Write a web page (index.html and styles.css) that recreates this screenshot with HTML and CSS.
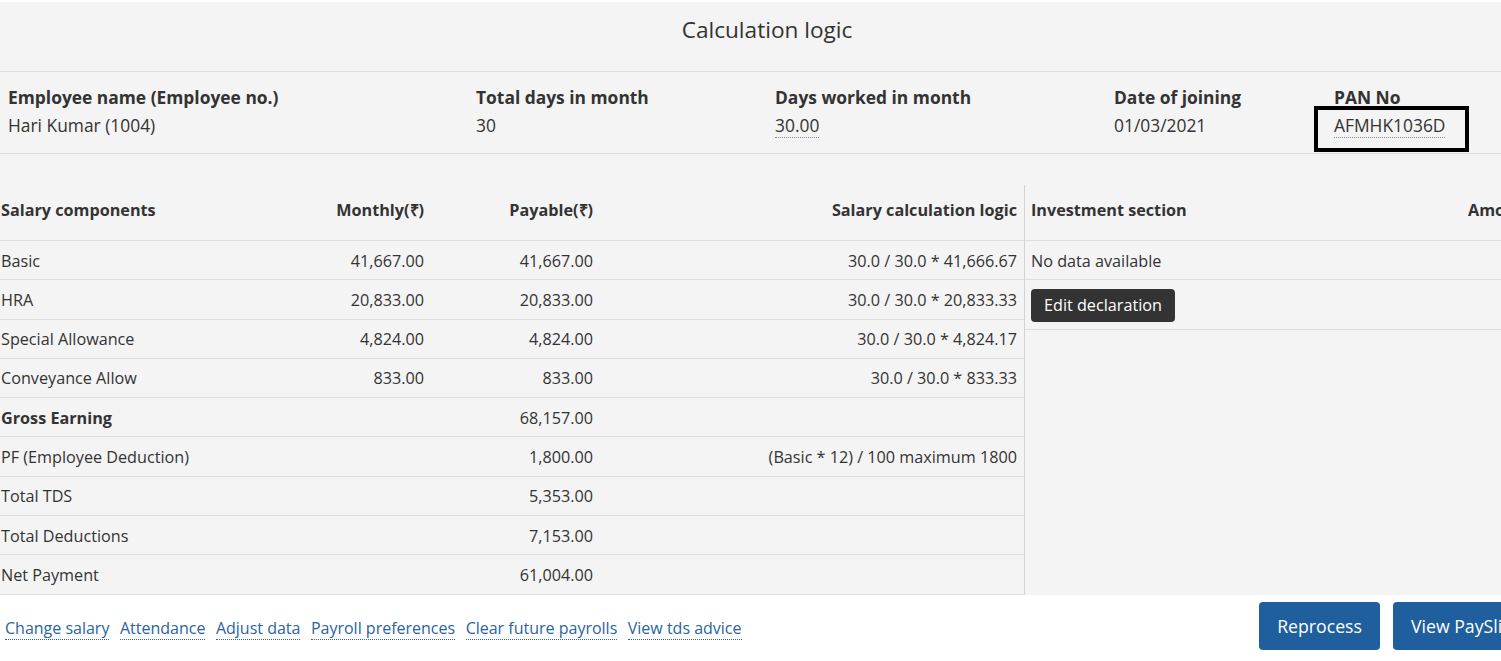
FILE: index.html
```html
<!DOCTYPE html>
<html lang="en">
<head>
<meta charset="utf-8">
<title>Calculation logic</title>
<link rel="stylesheet" href="styles.css">
</head>
<body>
<div class="page">
  <div class="panel">
    <h1 class="title">Calculation logic</h1>
    <div class="info">
      <div class="info-col">
        <div class="info-label">Employee name (Employee no.)</div>
        <div class="info-value">Hari Kumar (1004)</div>
      </div>
      <div class="info-col">
        <div class="info-label">Total days in month</div>
        <div class="info-value">30</div>
      </div>
      <div class="info-col">
        <div class="info-label">Days worked in month</div>
        <div class="info-value"><span class="dotted">30.00</span></div>
      </div>
      <div class="info-col">
        <div class="info-label">Date of joining</div>
        <div class="info-value">01/03/2021</div>
      </div>
      <div class="info-col pan-col">
        <div class="info-label">PAN No</div>
        <div class="info-value"><span class="dotted">AFMHK1036D</span></div>
        <div class="highlight-box"></div>
      </div>
    </div>

    <div class="tables">
      <div class="salary">
        <div class="srow head">
          <div class="c1">Salary components</div>
          <div class="c2">Monthly(₹)</div>
          <div class="c3">Payable(₹)</div>
          <div class="c4">Salary calculation logic</div>
        </div>
        <div class="srow">
          <div class="c1">Basic</div>
          <div class="c2">41,667.00</div>
          <div class="c3">41,667.00</div>
          <div class="c4">30.0 / 30.0 * 41,666.67</div>
        </div>
        <div class="srow">
          <div class="c1">HRA</div>
          <div class="c2">20,833.00</div>
          <div class="c3">20,833.00</div>
          <div class="c4">30.0 / 30.0 * 20,833.33</div>
        </div>
        <div class="srow">
          <div class="c1">Special Allowance</div>
          <div class="c2">4,824.00</div>
          <div class="c3">4,824.00</div>
          <div class="c4">30.0 / 30.0 * 4,824.17</div>
        </div>
        <div class="srow">
          <div class="c1">Conveyance Allow</div>
          <div class="c2">833.00</div>
          <div class="c3">833.00</div>
          <div class="c4">30.0 / 30.0 * 833.33</div>
        </div>
        <div class="srow">
          <div class="c1 bold">Gross Earning</div>
          <div class="c2"></div>
          <div class="c3">68,157.00</div>
          <div class="c4"></div>
        </div>
        <div class="srow">
          <div class="c1">PF (Employee Deduction)</div>
          <div class="c2"></div>
          <div class="c3">1,800.00</div>
          <div class="c4">(Basic * 12) / 100 maximum 1800</div>
        </div>
        <div class="srow">
          <div class="c1">Total TDS</div>
          <div class="c2"></div>
          <div class="c3">5,353.00</div>
          <div class="c4"></div>
        </div>
        <div class="srow">
          <div class="c1">Total Deductions</div>
          <div class="c2"></div>
          <div class="c3">7,153.00</div>
          <div class="c4"></div>
        </div>
        <div class="srow">
          <div class="c1">Net Payment</div>
          <div class="c2"></div>
          <div class="c3">61,004.00</div>
          <div class="c4"></div>
        </div>
      </div>

      <div class="invest">
        <div class="irow head">
          <div class="i1">Investment section</div>
          <div class="i2">Amount(₹)</div>
        </div>
        <div class="irow">
          <div class="i1">No data available</div>
          <div class="i2"></div>
        </div>
        <div class="irow btn-row">
          <div class="i1"><button class="dark-btn">Edit declaration</button></div>
          <div class="i2"></div>
        </div>
      </div>
    </div>
  </div>

  <div class="footer">
    <div class="links">
      <a href="#" class="link">Change salary</a>
      <a href="#" class="link">Attendance</a>
      <a href="#" class="link">Adjust data</a>
      <a href="#" class="link">Payroll preferences</a>
      <a href="#" class="link">Clear future payrolls</a>
      <a href="#" class="link">View tds advice</a>
    </div>
    <div class="actions">
      <button class="primary-btn">Reprocess</button>
      <button class="primary-btn">View PaySlip</button>
    </div>
  </div>
</div>
</body>
</html>
```

FILE: styles.css
```css
html, body {
  margin: 0;
  padding: 0;
  background: #ffffff;
  overflow: hidden;
}

body {
  font-family: "Open Sans", "Liberation Sans", sans-serif;
  color: #333333;
  width: 1501px;
  height: 661px;
}

.page {
  width: 1534px;
  padding-top: 2px;
}

.panel {
  background: #f4f4f4;
}

.title {
  margin: 0;
  padding: 13px 0 26px;
  font-size: 22.6px;
  line-height: 30px;
  font-weight: 400;
  text-align: center;
  border-bottom: 1px solid #dedede;
}

.info {
  display: grid;
  grid-template-columns: 468px 299px 339px 220px auto;
  padding: 13px 0 16px 8px;
  border-bottom: 1px solid #dedede;
}

.info-col {
  position: relative;
}

.info-label {
  font-size: 17.4px;
  font-weight: 700;
  line-height: 24px;
}

.info-value {
  font-size: 17.4px;
  line-height: 24px;
  margin-top: 4px;
}

.dotted {
  border-bottom: 1px dotted #8a8a8a;
}

.highlight-box {
  position: absolute;
  left: -20px;
  top: 21px;
  width: 147px;
  height: 38px;
  border: 4px solid #000000;
}

.tables {
  display: flex;
  margin-top: 31px;
}

.salary {
  width: 1024px;
  border-right: 1px solid #d2d2d2;
  font-size: 16.2px;
}

.srow {
  display: grid;
  grid-template-columns: 261px 170px 169px 424px;
  border-bottom: 1px solid #dedede;
}

.srow > div {
  padding: 8.5px 7px 7.6px 0;
  line-height: 22.2px;
  text-align: right;
}

.srow > .c1 {
  padding-left: 1px;
  text-align: left;
}

.head > div {
  font-weight: 700;
  padding-top: 14px;
  padding-bottom: 19px;
  line-height: 22px;
}

.bold {
  font-weight: 700;
}

.invest {
  flex: 1;
  font-size: 16.2px;
  align-self: flex-start;
}

.irow {
  display: grid;
  grid-template-columns: 437px auto;
  border-bottom: 1px solid #dedede;
}

.irow > div {
  padding: 8.5px 6px 7.6px;
  line-height: 22.2px;
}

.irow.head > div {
  padding-top: 14px;
  padding-bottom: 19px;
  line-height: 22px;
}

.irow.btn-row > div {
  padding-top: 9px;
  padding-bottom: 7px;
}

.dark-btn {
  font-family: "Open Sans", "Liberation Sans", sans-serif;
  font-size: 16.2px;
  line-height: 21px;
  color: #ffffff;
  background: #333333;
  border: none;
  border-radius: 4px;
  padding: 6px 13px;
  display: block;
}

.footer {
  display: flex;
  justify-content: space-between;
  align-items: center;
  padding-top: 7px;
  padding-right: 3px;
}

.links {
  display: flex;
  gap: 10.5px;
  padding-left: 5px;
  padding-top: 5px;
}

.link {
  font-size: 16px;
  line-height: 22px;
  color: #2a64a0;
  text-decoration: none;
  border-bottom: 1px dotted #2a64a0;
}

.actions {
  display: flex;
  gap: 13px;
}

.primary-btn {
  font-family: "Open Sans", "Liberation Sans", sans-serif;
  font-size: 17.7px;
  line-height: 24px;
  color: #ffffff;
  background: #1f5f9e;
  border: none;
  border-radius: 4px;
  height: 48px;
  padding: 0 18px;
}
```
